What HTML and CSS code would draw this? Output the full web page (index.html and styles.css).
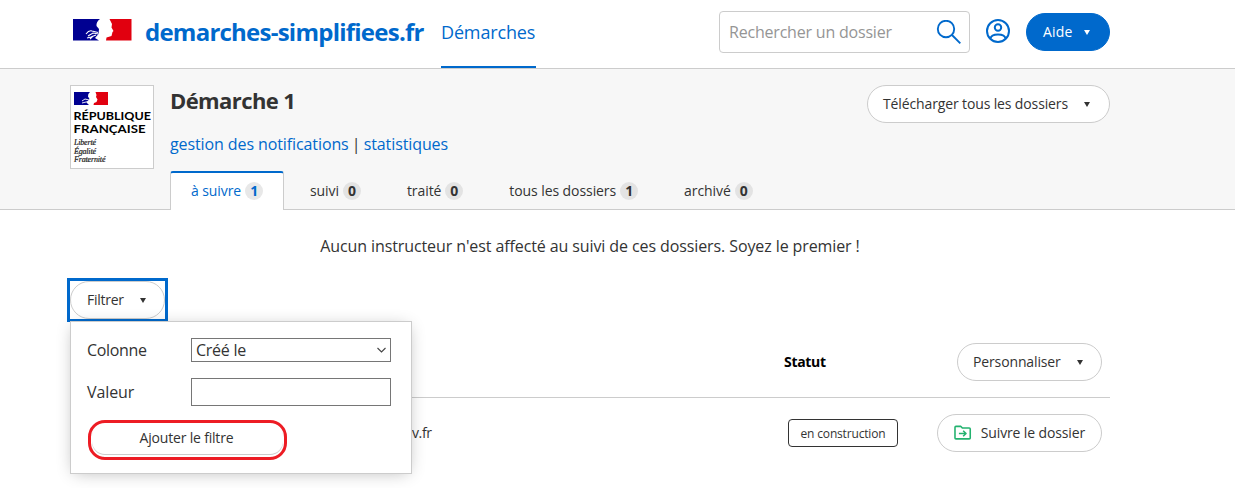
FILE: index.html
```html
<!DOCTYPE html>
<html lang="fr">
<head>
<meta charset="utf-8">
<title>Démarche 1 · demarches-simplifiees.fr</title>
<link rel="stylesheet" href="styles.css">
</head>
<body>
<header class="header">
  <div class="container header-row">
    <svg class="flag" viewBox="0 0 59 22" width="59" height="22">
      <path d="M0 0H27Q23 3 23.500 7L26 10L25.500 15L22 19L26 21.500H0Z" fill="#000091"/>
      <path d="M36.500 0H58.500V21.500H33L33.500 18.500L38.500 17L39.500 13L40.500 12L38.500 8.500L39 5Z" fill="#e1000f"/>
      <path d="M13 15Q16 11 19 12L25 13.500M15 17L20 14L25.500 15M14 19L18 18L23 16M17 20L20 17" stroke="#fff" stroke-width="1.100" fill="none"/>
    </svg>
    <a class="brand">demarches-simplifiees.fr</a>
    <nav class="nav"><a class="nav-link">Démarches</a></nav>
    <div class="search">
      <span class="placeholder">Rechercher un dossier</span>
      <svg width="26" height="26" viewBox="0 0 26 26" fill="none" stroke="#0069cc" stroke-width="1.900"><circle cx="10" cy="9" r="8.200"/><path d="M16 15L24.300 23.300"/></svg>
    </div>
    <svg class="account" width="24" height="24" viewBox="0 0 24 24" fill="none" stroke="#0069cc" stroke-width="2"><circle cx="12" cy="12" r="11"/><circle cx="12" cy="8.500" r="3.200"/><path d="M4.500 19.500C5 16.500 9 15.500 12 15.500S19 16.500 19.500 19.500"/></svg>
    <button class="button primary"><span class="t-aide">Aide</span><i class="caret"></i></button>
  </div>
</header>
<section class="band">
  <div class="container band-top">
    <div class="logo">
      <svg width="82" height="82" viewBox="0 0 82 82">
        <path d="M3 6H19Q16.500 8 17 10.500L18.500 13L15.500 16.500L18 19H3Z" fill="#000091"/>
        <path d="M24.500 6H37V19H22.500L23 17L25.500 16L26.500 13.500L25 11L25.500 9Z" fill="#e1000f"/>
        <path d="M11 15L14 13L18 14M11 17L17 15.500" stroke="#fff" stroke-width=".9" fill="none"/>
        <g class="logo-name"><text x="2.500" y="33.500" textLength="77.500" lengthAdjust="spacingAndGlyphs">RÉPUBLIQUE</text><text x="2.500" y="46.500" textLength="72" lengthAdjust="spacingAndGlyphs">FRANÇAISE</text></g>
        <g class="logo-motto"><text x="3" y="58.500" textLength="22">Liberté</text><text x="3" y="67.500" textLength="22">Égalité</text><text x="3" y="76" textLength="31.500">Fraternité</text></g>
      </svg>
    </div>
    <div class="title">
      <h1>Démarche 1</h1>
      <p class="links"><a>gestion des notifications</a> | <a>statistiques</a></p>
    </div>
    <button class="button download"><span>Télécharger tous les dossiers</span><i class="caret"></i></button>
  </div>
  <div class="container tabs">
    <a class="tab active"><span>à suivre</span><b>1</b></a>
    <a class="tab"><span>suivi</span><b>0</b></a>
    <a class="tab"><span>traité</span><b>0</b></a>
    <a class="tab"><span>tous les dossiers</span><b>1</b></a>
    <a class="tab"><span>archivé</span><b>0</b></a>
  </div>
</section>
<main class="container">
  <p class="notice">Aucun instructeur n'est affecté au suivi de ces dossiers. Soyez le premier !</p>
  <div class="filter">
    <div class="focus-ring"><button class="button toggle"><span class="t-filtrer">Filtrer</span><i class="caret"></i></button></div>
    <form class="panel">
      <label class="field"><span class="t-colonne">Colonne</span><span class="select"><span class="t-cree">Créé le</span><svg width="9" height="6" viewBox="0 0 9 6" fill="none" stroke="#444" stroke-width="1.100"><path d="M.5 1L4.500 5L8.500 1"/></svg></span></label>
      <label class="field second"><span>Valeur</span><input class="input" type="text"></label>
      <button class="button add" type="button"><span class="t-add">Ajouter le filtre</span></button>
    </form>
  </div>
  <div class="row head">
    <strong class="statut">Statut</strong>
    <button class="button"><span>Personnaliser</span><i class="caret"></i></button>
  </div>
  <div class="row">
    <span class="mail">v.fr</span>
    <span class="badge">en construction</span>
    <button class="button follow"><svg width="18" height="16" viewBox="0 0 18 16" fill="none" stroke="#23b26f" stroke-width="1.600" stroke-linejoin="round"><path d="M1 3V13Q1 14 2 14H15.500Q16.500 14 16.500 13V4Q16.500 3 15.500 3H8.500L7 1.300H2Q1 1.300 1 2.500Z"/><path d="M5 8.500H12M9.300 5.700L12.200 8.500L9.300 11.300"/></svg><span>Suivre le dossier</span></button>
  </div>
</main>
</body>
</html>
```
FILE: styles.css
```css
* { box-sizing: border-box; }
body { margin: 0; height: 488px; overflow: hidden; background: #fff; color: #333; font: 16px/20px "Open Sans", sans-serif; letter-spacing: -0.1px; }
p, h1 { margin: 0; }
.container { width: 1040px; margin-left: 70px; }

.header { height: 69px; border-bottom: 1px solid #ccc; }
.header-row { display: flex; height: 68px; align-items: flex-start; }
.flag { margin: 19px 13px 0 3px; flex: none; }
.brand { width: 296px; padding-top: 17px; font-size: 24px; line-height: 30px; font-weight: 700; color: #0069cc; letter-spacing: -0.76px; white-space: nowrap; }
.nav-link { display: block; height: 68px; padding-top: 19px; width: 95px; font-size: 18px; line-height: 26px; letter-spacing: -0.15px; color: #0069cc; border-bottom: 2px solid #0069cc; white-space: nowrap; }
.search { display: flex; justify-content: space-between; width: 251px; height: 42px; margin: 11px 0 0 183px; padding: 8px 7px 0 9px; border: 1px solid #ccc; border-radius: 4px; }
.placeholder { padding-top: 2px; color: #959595; letter-spacing: -0.2px; }
.account { margin: 19px 16px 0; }

.button { display: inline-flex; align-items: center; height: 38px; padding: 0 16px; border: 1px solid #ccc; border-radius: 30px; background: #fff; color: #333; font: 14px/20px "Open Sans", sans-serif; letter-spacing: -0.13px; white-space: nowrap; }
.caret { width: 0; height: 0; margin: 1px 3px 0 16px; border: 3px solid transparent; border-top: 5px solid currentColor; border-bottom: 0; }
.primary { width: 84px; margin-top: 13px; border-color: #0069cc; background: #0069cc; color: #fff; justify-content: space-between; }
.t-aide { letter-spacing: 0.2px; }
.primary .caret { margin-left: 0; }

.band { height: 141px; background: #f7f7f7; border-bottom: 1px solid #ccc; }
.band-top { display: flex; height: 102px; padding-top: 16px; }
.logo { width: 84px; height: 84px; border: 1px solid #ccc; background: #fff; }
.logo svg { display: block; }
.logo-name { font: 700 11.500px/11px Lato, sans-serif; fill: #000; letter-spacing: 0; }
.logo-motto { font: italic 8px "Liberation Serif", serif; fill: #222; stroke: #222; stroke-width: .2px; letter-spacing: 0; }
.title { flex: 1; padding-left: 16px; }
h1 { height: 33px; font-size: 22px; line-height: 30px; font-weight: 700; letter-spacing: -0.6px; }
.links { padding-top: 16px; word-spacing: -0.9px; }
.links a { color: #0069cc; word-spacing: 0; }
.download { width: 243px; padding-left: 15px; justify-content: space-between; }
.tabs { display: flex; padding-left: 100px; }
.tab { display: flex; align-items: center; height: 40px; padding-left: 26px; font-size: 14px; letter-spacing: -0.08px; white-space: nowrap; }
.tab b { width: 18px; height: 18px; margin-left: 4px; border-radius: 9px; background: #e3e3e3; line-height: 18px; text-align: center; }
.tab + .tab { margin-right: 20px; }
.active { width: 114px; height: 39px; padding: 0 0 2px 20px; background: #fff; border: 1px solid #ccc; border-top: 2px solid #0069cc; border-bottom: 0; border-radius: 3px 3px 0 0; color: #0069cc; }
.active b { background: #e8e8e8; }

.notice { padding: 26px 0 25px; text-align: center; }
.filter { position: relative; height: 38px; }
.focus-ring { width: 95px; height: 38px; outline: 3px solid #0069cc; }
.toggle { width: 95px; justify-content: space-between; }
.t-filtrer, .t-cree { letter-spacing: -0.27px; }
.t-colonne { letter-spacing: -0.33px; }
.t-add { letter-spacing: -0.19px; }
.panel { position: absolute; z-index: 2; left: 0; top: 40px; width: 342px; height: 153px; padding: 16px; border: 1px solid #ccc; background: #fff; box-shadow: 0 2px 16px -4px rgba(0, 0, 0, .3); }
.field { display: grid; grid-template-columns: 104px 200px; align-items: center; height: 24px; }
.second { height: 28px; margin-top: 16px; }
.select { display: flex; align-items: center; justify-content: space-between; height: 24px; padding: 0 4px; border: 1px solid #767676; }
.input { width: 200px; height: 28px; border: 1px solid #767676; }
.add { width: 199px; height: 40px; margin: 14px 0 0 1px; border: 3px solid #ed1c24; border-radius: 17px; justify-content: center; padding: 0 2px 4px 0; box-shadow: inset 0 -1px 0 1px #fff, inset 0 -2px 0 1px #ccc; }

.row { display: flex; align-items: center; height: 70px; padding-right: 8px; }
.head { height: 79px; padding-top: 7px; border-bottom: 1px solid #ccc; }
.statut { width: 173px; margin-left: 714px; color: #000; font-size: 14px; font-weight: 700; letter-spacing: -0.32px; }
.head .button { width: 145px; padding-left: 15px; justify-content: space-between; }
.mail { width: 376px; margin-left: 342px; font-size: 14px; letter-spacing: -0.37px; }
.badge { width: 110px; height: 28px; margin-right: 39px; border: 1px solid #333; border-radius: 4px; font-size: 12px; line-height: 27px; text-align: center; letter-spacing: -0.17px; }
.follow { width: 165px; gap: 9px; }
```
